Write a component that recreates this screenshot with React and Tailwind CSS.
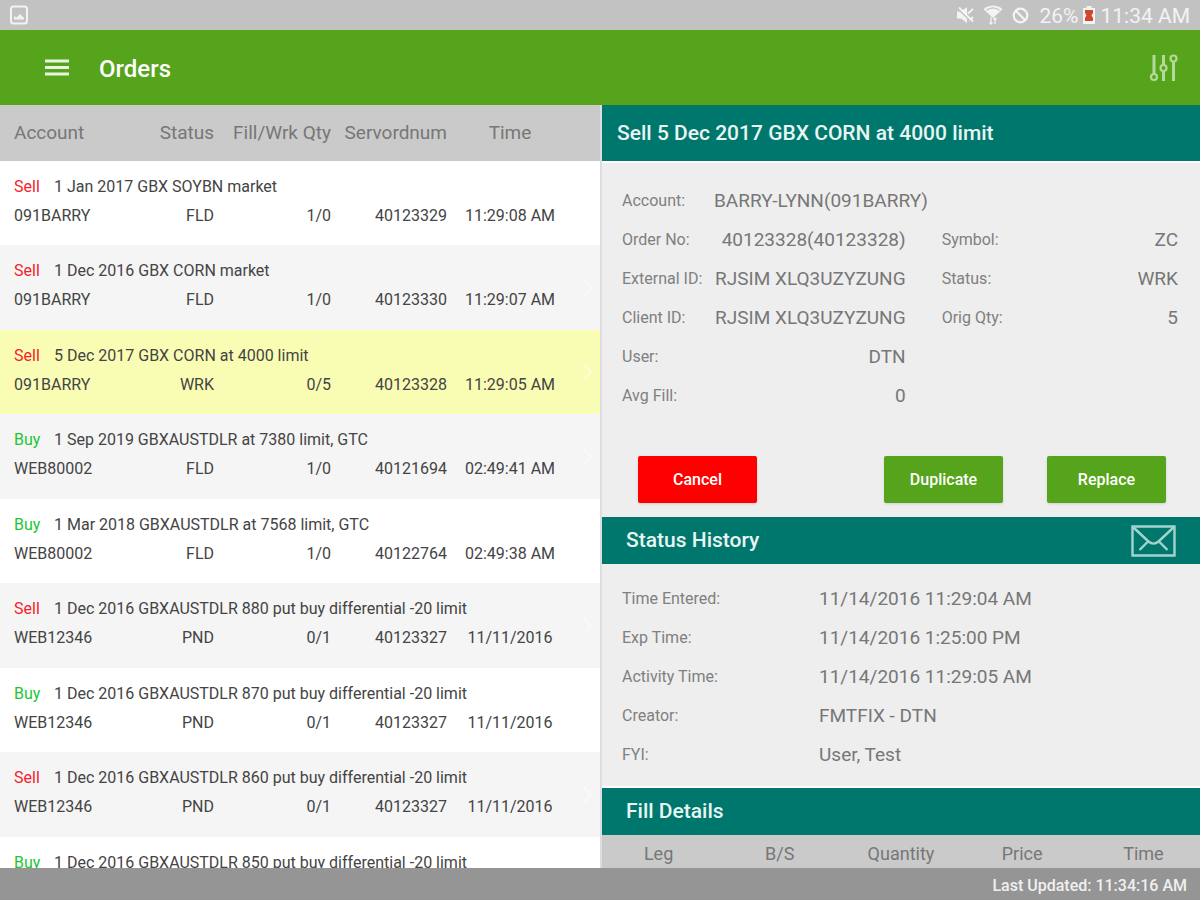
const orders = [
  { side: 'Sell', text: '1 Jan 2017 GBX SOYBN market', account: '091BARRY', status: 'FLD', qty: '1/0', num: '40123329', time: '11:29:08 AM' },
  { side: 'Sell', text: '1 Dec 2016 GBX CORN market', account: '091BARRY', status: 'FLD', qty: '1/0', num: '40123330', time: '11:29:07 AM' },
  { side: 'Sell', text: '5 Dec 2017 GBX CORN at 4000 limit', account: '091BARRY', status: 'WRK', qty: '0/5', num: '40123328', time: '11:29:05 AM', selected: true },
  { side: 'Buy', text: '1 Sep 2019 GBXAUSTDLR at 7380 limit, GTC', account: 'WEB80002', status: 'FLD', qty: '1/0', num: '40121694', time: '02:49:41 AM' },
  { side: 'Buy', text: '1 Mar 2018 GBXAUSTDLR at 7568 limit, GTC', account: 'WEB80002', status: 'FLD', qty: '1/0', num: '40122764', time: '02:49:38 AM' },
  { side: 'Sell', text: '1 Dec 2016 GBXAUSTDLR 880 put buy differential -20 limit', account: 'WEB12346', status: 'PND', qty: '0/1', num: '40123327', time: '11/11/2016' },
  { side: 'Buy', text: '1 Dec 2016 GBXAUSTDLR 870 put buy differential -20 limit', account: 'WEB12346', status: 'PND', qty: '0/1', num: '40123327', time: '11/11/2016' },
  { side: 'Sell', text: '1 Dec 2016 GBXAUSTDLR 860 put buy differential -20 limit', account: 'WEB12346', status: 'PND', qty: '0/1', num: '40123327', time: '11/11/2016' },
  { side: 'Buy', text: '1 Dec 2016 GBXAUSTDLR 850 put buy differential -20 limit', account: 'WEB12346', status: 'PND', qty: '0/1', num: '40123327', time: '11/11/2016' },
];

const history = [
  ['Time Entered:', '11/14/2016 11:29:04 AM'],
  ['Exp Time:', '11/14/2016 1:25:00 PM'],
  ['Activity Time:', '11/14/2016 11:29:05 AM'],
  ['Creator:', 'FMTFIX - DTN'],
  ['FYI:', 'User, Test'],
];

function StatusBar() {
  return (
    <div className="flex h-[30px] shrink-0 items-center justify-between bg-[#c2c2c2] pr-[10px] pl-[10px] text-white/80">
      <svg width="18" height="20" viewBox="0 0 18 20" fill="none" aria-hidden="true">
        <rect x="1" y="1.5" width="16" height="17" rx="2.5" stroke="currentColor" strokeWidth="2" />
        <path d="M4 14.5V11l2.5 1.5L10 9l4 4v1.5z" fill="currentColor" />
      </svg>
      <div className="flex items-center">
        <svg className="mr-[9px]" width="18" height="18" viewBox="0 0 18 18" fill="none" aria-hidden="true">
          <path d="M1 5.5h4L11 1v16L5 12.500H1z" fill="currentColor" />
          <path d="M12 7.500L17 3M13 15l4-4" stroke="currentColor" strokeWidth="1.800" />
          <path d="M1 1.500L17 17" stroke="#c2c2c2" strokeWidth="2" />
          <path d="M3 1.500L17 15.500" stroke="currentColor" strokeWidth="1.800" />
        </svg>
        <svg className="mr-[9px]" width="20" height="20" viewBox="0 0 20 20" fill="none" aria-hidden="true">
          <path d="M10 13L.5 4.200C6 -.6 14 -.6 19.500 4.200z" fill="currentColor" />
          <path d="M3.500 5.200c4-3 9-3 13 0" stroke="#c2c2c2" strokeWidth="1.200" />
          <path d="M8 19v-7M12 13v6M6.500 17.500L8 19l1.500-1.500M10.500 14.500L12 13l1.500 1.500" stroke="currentColor" strokeWidth="1.300" />
        </svg>
        <svg className="mr-[10px]" width="17" height="17" viewBox="0 0 17 17" fill="none" stroke="currentColor" strokeWidth="2.200" aria-hidden="true">
          <circle cx="8.500" cy="8.500" r="6.800" />
          <path d="M3.800 3.800l9.400 9.400" />
        </svg>
        <span className="pt-[2px] text-[21px] leading-6">26%</span>
        <svg className="mr-[5px] ml-[5px]" width="12" height="18" viewBox="0 0 12 18" aria-hidden="true">
          <path d="M3.500 0h5v2H12v16H0V2h3.500z" fill="currentColor" />
          <path d="M2 4h8v3L8.500 9.500 10 12v3H2v-3l1.500-2.500L2 7z" fill="#cf4a2c" />
        </svg>
        <span className="pt-[2px] text-[21px] leading-6">11:34 AM</span>
      </div>
    </div>
  );
}

function AppBar() {
  return (
    <header className="flex h-[75px] shrink-0 items-center bg-[#55a41b] pr-[22px] pl-[45px] text-white">
      <button type="button" aria-label="Menu" className="mr-[30px]">
        <svg className="block" width="24" height="18" viewBox="0 0 24 18" fill="none" stroke="currentColor" strokeWidth="2.800" opacity=".88" aria-hidden="true">
          <path d="M0 2h24M0 8.500h24M0 15h24" />
        </svg>
      </button>
      <h1 className="pt-[2px] text-[24px] leading-8 font-medium">Orders</h1>
      <button type="button" aria-label="Filter" className="ml-auto text-[#b4d998]">
        <svg className="block" width="29" height="28" viewBox="0 0 29 28" fill="none" stroke="currentColor" strokeWidth="2.200" aria-hidden="true">
          <path d="M5 1v19M14.500 1v10M14.500 17v10M24.500 8v19" strokeWidth="3" />
          <circle cx="5" cy="23" r="3" />
          <circle cx="14.500" cy="14" r="3" />
          <circle cx="24.500" cy="4.500" r="3" />
        </svg>
      </button>
    </header>
  );
}

function OrderRows({ order, index }) {
  const tone = order.selected ? 'bg-[#f9fdb4]' : index % 2 ? 'bg-[#f5f5f5]' : 'bg-white';
  const cell = index % 2 ? 'p-0 pt-[5px] pb-5' : 'p-0 pt-[5px] pb-[19px]';
  return (
    <tbody className={tone}>
      <tr>
        <td colSpan={5} className="pt-4 pb-1 pl-[14px]">
          <span className={order.side === 'Sell' ? 'inline-block w-10 text-[#f5222d]' : 'inline-block w-10 text-[#22c534]'}>{order.side}</span>
          {order.text}
        </td>
        <td rowSpan={2} className="p-0 text-white">
          <svg className="ml-[10px]" width="10" height="18" viewBox="0 0 10 18" fill="none" stroke="currentColor" strokeWidth="1.500" opacity=".5" aria-hidden="true">
            <path d="M1 1l7 8-7 8" />
          </svg>
        </td>
      </tr>
      <tr className="text-right">
        <td className={`${cell} text-left`}><span className="pl-[14px]">{order.account}</span></td>
        <td className={cell}>{order.status}</td>
        <td className={cell}>{order.qty}</td>
        <td className={cell}>{order.num}</td>
        <td className={`${cell} text-center`}>{order.time}</td>
      </tr>
    </tbody>
  );
}

function OrderList() {
  return (
    <section aria-label="Orders" className="box-content w-1/2 shrink-0 overflow-y-auto border-r-2 border-[#dcdce2] bg-white [scrollbar-width:none]">
      <table className="w-full table-fixed border-collapse text-[16px] leading-5 whitespace-nowrap text-[#444]">
        <colgroup>
          <col />
          <col className="w-[100px]" />
          <col className="w-[117px]" />
          <col className="w-[116px]" />
          <col className="w-[126px]" />
          <col className="w-[27px]" />
        </colgroup>
        <thead className="bg-[#cacaca] text-[19px] text-[#777]">
          <tr className="h-14 text-right">
            <th className="p-0 pl-[14px] text-left font-normal">Account</th>
            <th className="p-0 font-normal">Status</th>
            <th className="p-0 font-normal">Fill/Wrk Qty</th>
            <th className="p-0 font-normal">Servordnum</th>
            <th className="p-0 text-center font-normal">Time</th>
            <td />
          </tr>
        </thead>
        {orders.map((order, i) => (
          <OrderRows key={i} order={order} index={i} />
        ))}
      </table>
    </section>
  );
}

function Field({ label, value }) {
  return (
    <div className="flex h-6 items-center justify-between">
      <dt className="text-[16px]">{label}</dt>
      <dd className="text-[19px] text-[#777]">{value}</dd>
    </div>
  );
}

function OrderDetail() {
  return (
    <section aria-label="Order detail" className="min-w-0 flex-1 overflow-y-auto bg-[#eee] text-[#808080] [scrollbar-width:none]">
      <h2 className="flex h-14 items-center bg-[#00776d] pt-[2px] pl-[15px] text-[21px] font-medium whitespace-nowrap text-[#e8f5f3]">
        Sell 5 Dec 2017 GBX CORN at 4000 limit
      </h2>
      <dl className="grid grid-cols-[6fr_5fr] gap-x-9 gap-y-[15px] border-t-2 border-white pt-[26px] pr-[22px] pl-5 leading-6 whitespace-nowrap">
        <div className="col-span-2 flex h-6 items-center">
          <dt className="w-[92px] text-[16px]">Account:</dt>
          <dd className="text-[19px] text-[#777]">BARRY-LYNN(091BARRY)</dd>
        </div>
        <Field label="Order No:" value="40123328(40123328)" />
        <Field label="Symbol:" value="ZC" />
        <Field label="External ID:" value="RJSIM XLQ3UZYZUNG" />
        <Field label="Status:" value="WRK" />
        <Field label="Client ID:" value="RJSIM XLQ3UZYZUNG" />
        <Field label="Orig Qty:" value="5" />
        <div className="col-start-1"><Field label="User:" value="DTN" /></div>
        <div className="col-start-1"><Field label="Avg Fill:" value="0" /></div>
      </dl>
      <div className="flex items-center pt-12 pr-[34px] pb-[14px] pl-9 text-[16px] font-medium text-white">
        <button type="button" className="mr-auto h-[47px] w-[119px] rounded-xs bg-[#fe0000] shadow-sm">Cancel</button>
        <button type="button" className="mr-11 h-[47px] w-[119px] rounded-xs bg-[#55a41b] shadow-sm">Duplicate</button>
        <button type="button" className="h-[47px] w-[119px] rounded-xs bg-[#55a41b] shadow-sm">Replace</button>
      </div>
      <div className="flex h-[47px] items-center justify-between bg-[#00776d] pr-6 pl-6 text-[#e8f5f3]">
        <h2 className="text-[21px] font-medium">Status History</h2>
        <button type="button" aria-label="Send message" className="text-[#a3d3ce]">
          <svg className="block" width="45" height="32" viewBox="0 0 45 32" fill="none" stroke="currentColor" strokeWidth="2.400" aria-hidden="true">
            <path d="M1.500 1.500h42v29h-42z" />
            <path d="M2 2l15.500 14.500c3 2.600 7 2.600 10 0L43 2M17 16.500L8.500 25M28 16.500l8.500 8.500" />
          </svg>
        </button>
      </div>
      <dl className="flex flex-col gap-[15px] border-b-2 border-white pt-[23px] pb-[19px] pl-5 leading-6">
        {history.map(([label, value]) => (
          <div key={label} className="flex h-6 items-center">
            <dt className="w-[197px] text-[16px]">{label}</dt>
            <dd className="text-[19px] text-[#777]">{value}</dd>
          </div>
        ))}
      </dl>
      <h2 className="flex h-[47px] items-center bg-[#00776d] pl-6 text-[21px] font-medium text-[#e8f5f3]">Fill Details</h2>
      <div className="overflow-hidden bg-[#cacaca]">
        <div className="-mx-1">
          <table className="w-full table-fixed text-[18px] leading-6 text-[#777]">
            <thead>
              <tr className="h-[37px]">
                <th className="p-0 font-normal">Leg</th>
                <th className="p-0 font-normal">B/S</th>
                <th className="p-0 font-normal">Quantity</th>
                <th className="p-0 font-normal">Price</th>
                <th className="p-0 font-normal">Time</th>
              </tr>
            </thead>
          </table>
        </div>
      </div>
    </section>
  );
}

export default function App() {
  return (
    <div className="flex h-screen flex-col overflow-hidden font-['Roboto',sans-serif]">
      <StatusBar />
      <AppBar />
      <main className="flex min-h-0 flex-1">
        <OrderList />
        <OrderDetail />
      </main>
      <footer className="flex h-8 shrink-0 items-center justify-end bg-[#959595] pt-1 pr-[13px] text-[16px] font-medium text-[#f0f0f0]">
        Last Updated: 11:34:16 AM
      </footer>
    </div>
  );
}
